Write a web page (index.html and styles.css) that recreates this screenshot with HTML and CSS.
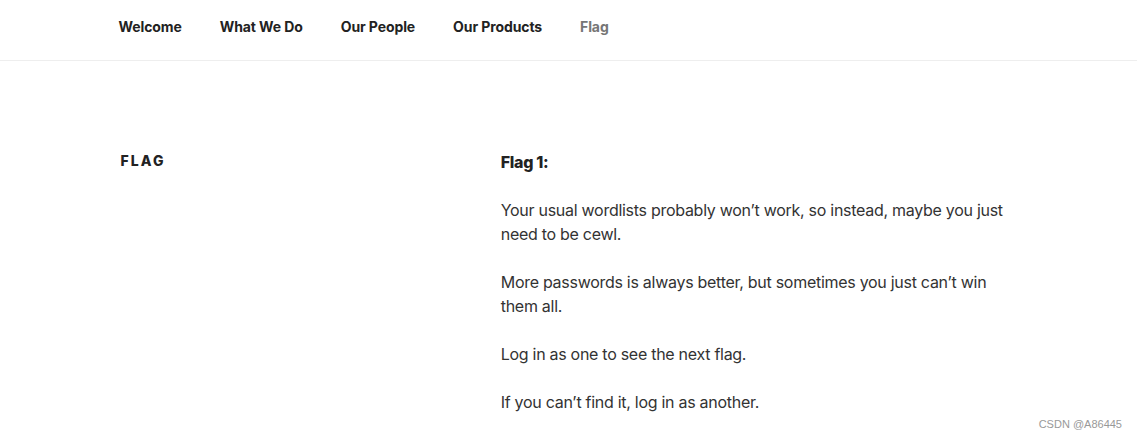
FILE: index.html
```html
<!DOCTYPE html>
<html lang="en">
<head>
<meta charset="utf-8">
<title>Flag</title>
<link rel="stylesheet" href="styles.css">
</head>
<body>
<header class="site-nav">
  <nav class="nav-wrap">
    <ul class="menu">
      <li><a href="#">Welcome</a></li>
      <li><a href="#">What We Do</a></li>
      <li><a href="#">Our People</a></li>
      <li><a href="#">Our Products</a></li>
      <li class="current"><a href="#">Flag</a></li>
    </ul>
  </nav>
</header>
<main class="wrap">
  <div class="page-header">
    <h1 class="page-title">Flag</h1>
  </div>
  <div class="entry-content">
    <p><strong>Flag 1:</strong></p>
    <p>Your usual wordlists probably won’t work, so instead, maybe you just need to be cewl.</p>
    <p>More passwords is always better, but sometimes you just can’t win them all.</p>
    <p>Log in as one to see the next flag.</p>
    <p>If you can’t find it, log in as another.</p>
  </div>
</main>
<div class="watermark">CSDN @A86445</div>
</body>
</html>
```

FILE: styles.css
```css
html, body {
  margin: 0;
  padding: 0;
  background: #fff;
}
body {
  font-family: Inter, "Liberation Sans", sans-serif;
  color: #333;
  font-size: 16px;
  line-height: 24px;
  overflow: hidden;
  height: 438px;
  position: relative;
}
.site-nav {
  border-bottom: 1px solid #eee;
  height: 61px;
  box-sizing: border-box;
}
.nav-wrap {
  max-width: 1000px;
  margin: 0 auto;
  padding: 0 48px;
  box-sizing: border-box;
}
.menu {
  list-style: none;
  margin: 0 0 0 -17px;
  padding: 0;
  display: flex;
}
.menu a {
  display: block;
  padding: 17px 19px 18px;
  font-size: 14px;
  line-height: 20px;
  font-weight: 700;
  color: #222;
  text-decoration: none;
  letter-spacing: -0.1px;
}
.menu .current a {
  color: #767676;
}
.wrap {
  max-width: 1000px;
  margin: 0 auto;
  padding: 89px 48px 0;
  box-sizing: border-box;
  display: flex;
  justify-content: space-between;
}
.page-header {
  width: 36%;
}
.page-title {
  margin: 0;
  padding: 1px 0 0 4px;
  font-size: 14px;
  line-height: 20px;
  font-weight: 800;
  letter-spacing: 0.15em;
  text-transform: uppercase;
  color: #222;
}
.entry-content {
  width: 57.5%;
  letter-spacing: -0.28px;
}
.entry-content p {
  margin: 0 0 24px;
}
.entry-content strong {
  color: #222;
  font-weight: 800;
}
.watermark {
  position: absolute;
  right: 15px;
  top: 416px;
  font-size: 11px;
  line-height: 16px;
  color: #999;
  font-family: "Liberation Sans", Arial, sans-serif;
}
```
